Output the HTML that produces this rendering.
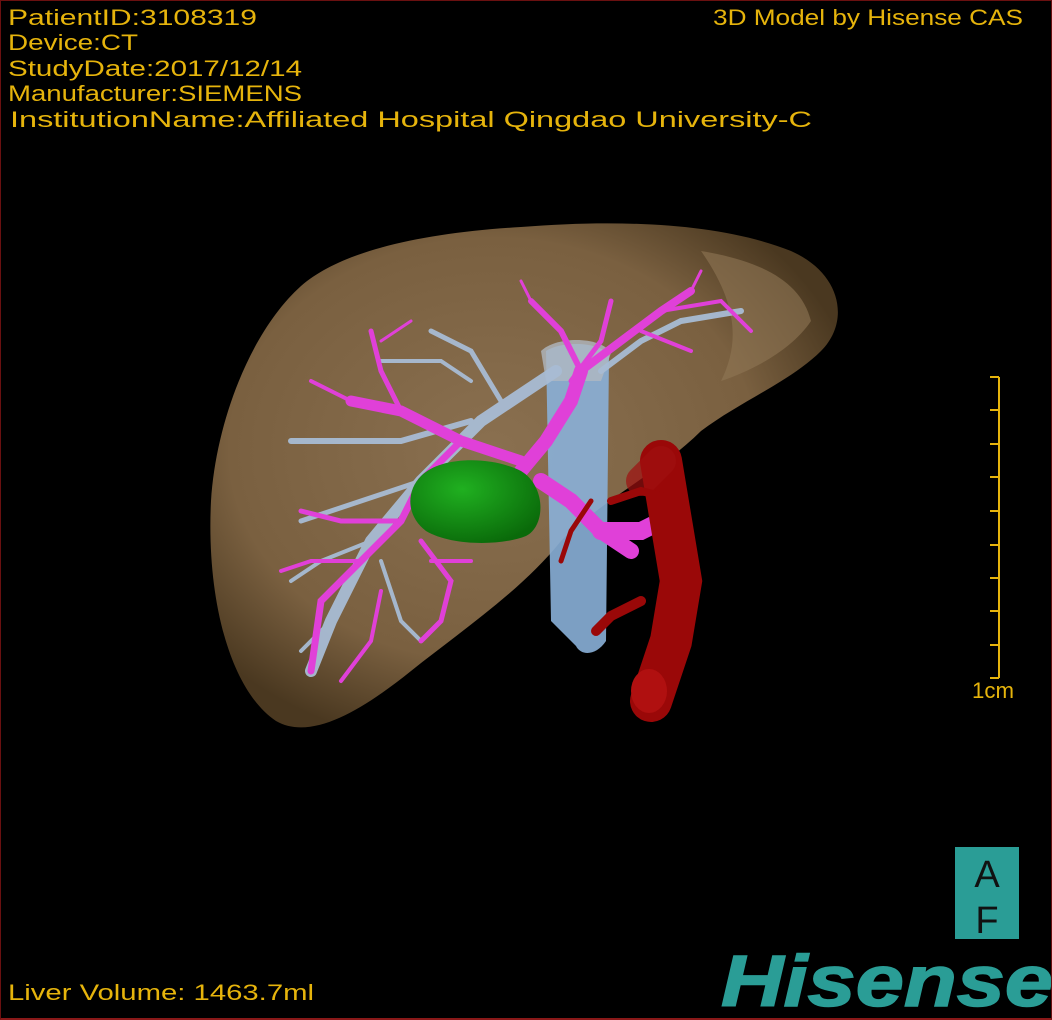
<!DOCTYPE html>
<html><head><meta charset="utf-8"><style>
html,body{margin:0;padding:0;background:#000;}
#c{position:relative;width:1052px;height:1020px;overflow:hidden;background:#000;box-sizing:border-box;border:1px solid #6a1010;border-bottom:2px solid #8a1818;}
svg{position:absolute;left:0;top:0;}
.t{font-family:"Liberation Sans","Noto Sans CJK SC",sans-serif;font-size:22px;fill:#e6b40c;}
</style></head><body><div id="c">
<svg width="1052" height="1020" viewBox="0 0 1052 1020">
<defs>
<radialGradient id="lv" cx="0.45" cy="0.45" r="0.6">
<stop offset="0" stop-color="#8a7050"/><stop offset="0.7" stop-color="#7a6040"/><stop offset="1" stop-color="#4a3820"/>
</radialGradient>
<radialGradient id="gr" cx="0.4" cy="0.35" r="0.7"><stop offset="0" stop-color="#20b020"/><stop offset="1" stop-color="#0a6a0a"/></radialGradient>
</defs>
<path d="M300 285 C340 250 420 232 520 226 C620 218 720 222 790 250 C840 272 850 320 820 350 C790 380 740 400 700 430 C660 470 600 500 560 540 C520 590 460 630 410 670 C360 710 310 740 275 720 C230 690 205 600 210 500 C215 420 250 330 300 285 Z" fill="url(#lv)"/>
<path d="M700 250 C760 260 800 280 810 320 C790 350 750 370 720 380 C740 340 735 300 700 250Z" fill="#8f7655" opacity="0.6"/>
<path d="M545 350 C560 340 600 340 608 355 L605 640 C595 655 580 655 575 645 L550 620 Z" fill="#8ab0d8" opacity="0.9"/>
<path d="M540 350 C555 335 600 335 610 352 L600 380 L545 380 Z" fill="#b0b8c0" opacity="0.8"/>
<g stroke="#a8bcd4" stroke-linecap="round" fill="none" opacity="0.95">
<path d="M555 370 L480 420 L420 480 L370 540 L330 620 L310 670" stroke-width="12"/>
<path d="M470 420 L400 440 L330 440 L290 440" stroke-width="6"/>
<path d="M420 480 L360 500 L300 520" stroke-width="5"/>
<path d="M370 540 L320 560 L290 580" stroke-width="4"/>
<path d="M380 560 L400 620 L420 640" stroke-width="4"/>
<path d="M500 400 L470 350 L430 330" stroke-width="5"/>
<path d="M600 370 L640 340 L680 320 L740 310" stroke-width="6"/>
<path d="M330 620 L300 650" stroke-width="4"/>
<path d="M470 380 L440 360 L380 360" stroke-width="4"/>
</g>
<g stroke="#e040d8" stroke-linecap="round" fill="none">
<path d="M520 470 L545 440 L570 400 L580 370" stroke-width="14"/>
<path d="M520 460 L460 440 L400 410 L350 400" stroke-width="11"/>
<path d="M580 370 L620 340 L660 310 L690 290" stroke-width="8"/>
<path d="M580 370 L560 330 L530 300" stroke-width="6"/>
<path d="M570 380 L600 340 L610 300" stroke-width="5"/>
<path d="M400 410 L380 370 L370 330" stroke-width="5"/>
<path d="M350 400 L310 380" stroke-width="4"/>
<path d="M460 440 L420 480 L400 520 L360 560 L320 600 L310 670" stroke-width="7"/>
<path d="M400 520 L340 520 L300 510" stroke-width="5"/>
<path d="M360 560 L310 560 L280 570" stroke-width="4"/>
<path d="M420 540 L450 580 L440 620 L420 640" stroke-width="5"/>
<path d="M380 590 L370 640 L340 680" stroke-width="4"/>
<path d="M430 560 L470 560" stroke-width="4"/>
<path d="M660 310 L720 300 L750 330" stroke-width="4"/>
<path d="M640 330 L690 350" stroke-width="4"/>
<path d="M530 300 L520 280" stroke-width="3"/>
<path d="M690 290 L700 270" stroke-width="3"/>
<path d="M380 340 L410 320" stroke-width="3"/>
<path d="M540 480 L570 500 L600 530 L630 550" stroke-width="16"/>
<path d="M600 530 L640 530 L670 515" stroke-width="18"/>
</g>
<g stroke="#9a0808" stroke-linecap="round" fill="none">
<path d="M660 460 L670 520 L680 580 L670 640 L650 700" stroke-width="42"/>
<path d="M640 480 L660 460" stroke-width="30" stroke="#a01010" opacity="0.7"/>
<path d="M640 600 L610 615 L595 630" stroke-width="10"/>
<path d="M590 500 L570 530 L560 560" stroke-width="5"/>
<path d="M610 500 L640 490 L680 500" stroke-width="8"/>
</g>
<ellipse cx="648" cy="690" rx="18" ry="22" fill="#b01010"/>
<path d="M420 475 C440 455 490 455 520 470 C545 485 545 525 525 535 C500 545 450 545 425 530 C405 515 405 490 420 475Z" fill="url(#gr)"/>
<g stroke="#e6b40c" stroke-width="2">
<line x1="998" y1="376" x2="998" y2="677"/>
<line x1="989" y1="376" x2="998" y2="376"/><line x1="989" y1="409" x2="998" y2="409"/>
<line x1="989" y1="443" x2="998" y2="443"/><line x1="989" y1="476" x2="998" y2="476"/>
<line x1="989" y1="510" x2="998" y2="510"/><line x1="989" y1="544" x2="998" y2="544"/>
<line x1="989" y1="577" x2="998" y2="577"/><line x1="989" y1="610" x2="998" y2="610"/>
<line x1="989" y1="644" x2="998" y2="644"/><line x1="989" y1="677" x2="998" y2="677"/>
</g>
<rect x="954" y="846" width="64" height="92" fill="#2a9d96"/>
<text x="986" y="886" font-family="Liberation Sans Narrow,Liberation Sans,sans-serif" font-size="38" text-anchor="middle" fill="#111">A</text>
<text x="986" y="932" font-family="Liberation Sans Narrow,Liberation Sans,sans-serif" font-size="38" text-anchor="middle" fill="#111">F</text>
<text x="720" y="1005" font-family="Liberation Sans,sans-serif" font-weight="bold" font-style="italic" font-size="72" textLength="332" lengthAdjust="spacingAndGlyphs" fill="#2a9d96" stroke="#2a9d96" stroke-width="1.5">Hisense</text>
<text class="t" x="7" y="24" textLength="249" lengthAdjust="spacingAndGlyphs">PatientID:3108319</text>
<text class="t" x="7" y="49" textLength="130" lengthAdjust="spacingAndGlyphs">Device:CT</text>
<text class="t" x="7" y="75" textLength="294" lengthAdjust="spacingAndGlyphs">StudyDate:2017/12/14</text>
<text class="t" x="7" y="100" textLength="294" lengthAdjust="spacingAndGlyphs">Manufacturer:SIEMENS</text>
<text class="t" x="9" y="126" textLength="802" lengthAdjust="spacingAndGlyphs">InstitutionName:Affiliated Hospital Qingdao University-C</text>
<text class="t" x="712" y="24" textLength="310" lengthAdjust="spacingAndGlyphs">3D Model by Hisense CAS</text>
<text class="t" x="971" y="697" textLength="42" lengthAdjust="spacingAndGlyphs">1cm</text>
<text class="t" x="7" y="999" textLength="306" lengthAdjust="spacingAndGlyphs">Liver Volume: 1463.7ml</text>
</svg>
</div></body></html>
